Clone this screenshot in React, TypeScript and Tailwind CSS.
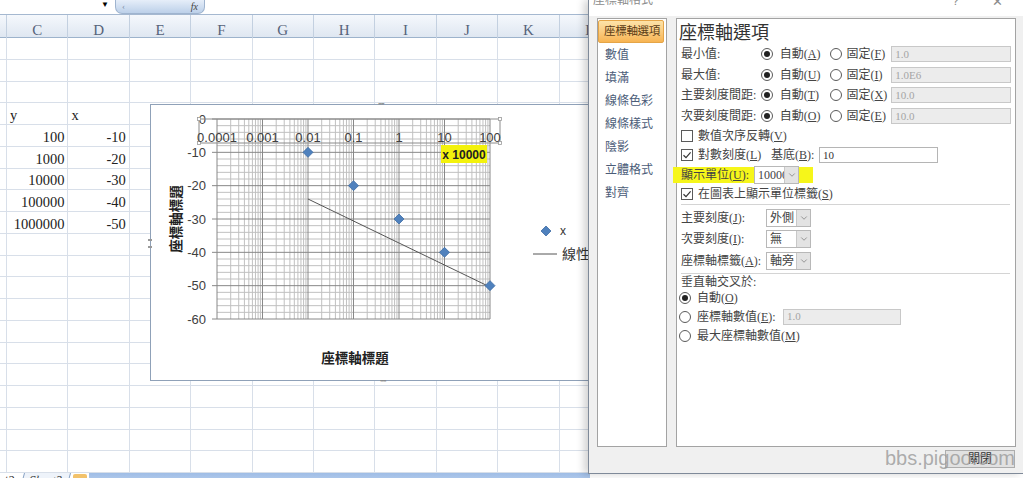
import { ChevronDown } from "lucide-react";

const COLS = ["", "C", "D", "E", "F", "G", "H", "I", "J", "K", "L"];

const DATA: Record<number, [string, string]> = {
  3: ["y", "x"],
  4: ["100", "-10"],
  5: ["1000", "-20"],
  6: ["10000", "-30"],
  7: ["100000", "-40"],
  8: ["1000000", "-50"],
};

function Sheet() {
  const rows = Array.from({ length: 20 }, (_, r) => r);
  return (
    <div className="flex flex-col w-[590px] overflow-hidden">
      <div className="flex h-[15px] items-start border-b border-[#a5b8d0] bg-white">
        <div className="w-[101px]" />
        <span className="text-[8px] leading-[10px] text-black">▼</span>
        <div className="ml-[6px] w-[90px] h-[14px] rounded-b-[7px] bg-linear-to-b from-[#e6eef9] to-[#bcd0e9] border border-t-0 border-[#9fb4cf] flex items-center justify-between px-[6px]">
          <span className="text-[9px] leading-none text-[#7a8ca5]">‹</span>
          <span className="italic text-[10px] leading-none text-[#444]">fx</span>
        </div>
      </div>
      <div className="grid grid-cols-[7px_repeat(10,61.4px)] h-[23px] bg-linear-to-b from-[#f5f8fc] to-[#dfe7f1] border-b border-[#9db3cc]">
        {COLS.map((c, i) => (
          <div
            key={i}
            className="border-r border-[#c3d0e0] flex items-center justify-center pt-[4px] text-[15px] text-[#56637a]"
          >
            {c}
          </div>
        ))}
      </div>
      <div className="grid grid-cols-[7px_repeat(10,61.4px)] auto-rows-[21.75px]">
        {rows.map((r) =>
          COLS.map((_, c) => {
            const d = DATA[r];
            let text = "";
            if (d && c === 1) text = d[0];
            if (d && c === 2) text = d[1];
            const left = r === 3;
            return (
              <div
                key={`${r}-${c}`}
                className={`border-r border-b border-[#d8dfe9] flex items-end leading-[17px] text-[14.5px] text-[#222] ${
                  left ? "justify-start pl-[3px]" : "justify-end pr-[3px]"
                }`}
              >
                {text}
              </div>
            );
          })
        )}
      </div>
      <div className="flex items-start h-[20px] text-[12px] leading-[14px]">
        <span className="w-[20px] text-[#222]">et2</span>
        <span className="ml-[2px] px-[6px] bg-[#eef3fa] border border-t-0 border-[#8aa3c4] text-[#333] -skew-x-[15deg]">
          Sheet3
        </span>
        <span className="ml-[4px] w-[14px] h-[10px] mt-[1px] rounded-[2px] bg-[#f2c26b]" />
        <div className="ml-[2px] flex-1 h-[14px] bg-linear-to-b from-[#9fbde6] to-[#c3d6ef]" />
      </div>
    </div>
  );
}

const X0 = 66;
const DEC = 45.5;
const Y0 = 14;
const YS = 200 / 60;

function Chart() {
  const vMinor: number[] = [];
  const vMajor: number[] = [];
  for (let i = 0; i < 6; i++) {
    const x = X0 + DEC * i;
    vMajor.push(x);
    for (let k = 2; k <= 9; k++) vMinor.push(x + DEC * Math.log10(k));
  }
  vMajor.push(X0 + DEC * 6);
  const hMinor: number[] = [];
  const hMajor: number[] = [];
  for (let v = 0; v <= 60; v += 2) {
    const y = Y0 + v * YS;
    if (v % 10 === 0) hMajor.push(y);
    else hMinor.push(y);
  }
  const right = X0 + DEC * 6;
  const bottom = Y0 + 60 * YS;
  const xLabels = ["0.0001", "0.001", "0.01", "0.1", "1", "10", "100"];
  const pts = [0, 1, 2, 3, 4].map((i) => ({
    x: X0 + DEC * (2 + i),
    y: Y0 + (i + 1) * 10 * YS,
  }));

  return (
    <div className="absolute left-[150px] top-[104px] w-[440px] h-[277px] border border-[#8fa1b8] bg-white">
      <svg width="438" height="275" className="block font-['Liberation_Sans','Noto_Sans_CJK_TC',sans-serif]">
        {vMinor.map((x, i) => (
          <line key={`vm${i}`} x1={x} x2={x} y1={Y0} y2={bottom} stroke="#c0c0c0" strokeWidth="1" />
        ))}
        {hMinor.map((y, i) => (
          <line key={`hm${i}`} x1={X0} x2={right} y1={y} y2={y} stroke="#c0c0c0" strokeWidth="1" />
        ))}
        {vMajor.map((x, i) => (
          <line key={`vM${i}`} x1={x} x2={x} y1={Y0} y2={bottom} stroke="#888" strokeWidth="1" />
        ))}
        {hMajor.map((y, i) => (
          <line key={`hM${i}`} x1={X0 - 5} x2={right} y1={y} y2={y} stroke="#888" strokeWidth="1" />
        ))}
        {hMajor.map((y, i) => (
          <text key={`yl${i}`} x={55} y={y + 4.5} textAnchor="end" fill="#404040" className="text-[13px]">
            {i === 0 ? "0" : `-${i * 10}`}
          </text>
        ))}
        <rect x={48} y={14} width={301} height={24} fill="none" stroke="#8c8c8c" strokeWidth="1" />
        {[
          [48, 14],
          [349, 14],
          [48, 38],
          [349, 38],
        ].map(([x, y], i) => (
          <rect key={`h${i}`} x={x - 1.5} y={y - 1.5} width={3} height={3} fill="#fff" stroke="#999" strokeWidth="0.8" />
        ))}
        {xLabels.map((l, i) => (
          <text key={`xl${i}`} x={X0 + DEC * i} y={36.5} textAnchor="middle" fill="#404040" className="text-[13px]">
            {l}
          </text>
        ))}
        <rect x={290} y={40} width={46} height={18} fill="#f3f20c" />
        <text x={313} y={53.5} textAnchor="middle" fill="#222" fontWeight="bold" className="text-[12px]">
          x 10000
        </text>
        <line x1={157} y1={94} x2={339} y2={182} stroke="#555" strokeWidth="1" />
        {pts.map((p, i) => (
          <polygon
            key={`p${i}`}
            points={`${p.x},${p.y - 5} ${p.x + 5},${p.y} ${p.x},${p.y + 5} ${p.x - 5},${p.y}`}
            fill="#4f81bd"
            stroke="#3d6ca5"
            strokeWidth="0.8"
          />
        ))}
        <text
          x={26}
          y={114}
          textAnchor="middle"
          dominantBaseline="middle"
          transform="rotate(-90 26 114)"
          fill="#222"
          fontWeight="bold"
          className="text-[13.5px]"
        >
          座標軸標題
        </text>
        <text x={204} y={258} textAnchor="middle" fill="#222" fontWeight="bold" className="text-[13.5px]">
          座標軸標題
        </text>
        <polygon points="395,121 400,126 395,131 390,126" fill="#4f81bd" stroke="#3d6ca5" strokeWidth="0.8" />
        <text x={409} y={130} fill="#333" className="text-[12px]">
          x
        </text>
        <line x1={382} y1={149} x2={406} y2={149} stroke="#555" strokeWidth="1" />
        <text x={411} y={154} fill="#333" className="text-[14px]">
          線性(x)
        </text>
      </svg>
      <span className="absolute left-[227px] -top-[4px] text-[7px] leading-none tracking-[-1px] text-[#888]">••••</span>
      <span className="absolute left-[229px] -bottom-[5px] text-[7px] leading-none tracking-[-1px] text-[#888]">••••</span>
      <span className="absolute -left-[3px] top-[134px] w-[4px] h-[9px] border-y-2 border-dotted border-[#999]" />
    </div>
  );
}

function Radio({ on }: { on?: boolean }) {
  return (
    <span className="w-[12px] h-[12px] rounded-full border border-[#5a5a5a] bg-white flex items-center justify-center shrink-0">
      {on && <span className="w-[6px] h-[6px] rounded-full bg-[#222]" />}
    </span>
  );
}

function Check({ on }: { on?: boolean }) {
  return (
    <span className="w-[12px] h-[12px] border border-[#5a5a5a] bg-white flex items-center justify-center shrink-0">
      {on && (
        <svg width="10" height="10" viewBox="0 0 10 10">
          <path d="M1.5 5.2 L4 7.6 L8.6 2.4" fill="none" stroke="#333" strokeWidth="1.2" />
        </svg>
      )}
    </span>
  );
}

function Field({ value, w, disabled }: { value: string; w: string; disabled?: boolean }) {
  return (
    <div
      className={`${w} h-[16px] border flex items-center px-[3px] text-[11px] ${
        disabled ? "bg-[#ececec] border-[#c8c8c8] text-[#a5a5a5]" : "bg-white border-[#b5b5b5] text-[#333]"
      }`}
    >
      {value}
    </div>
  );
}

function Drop({ value, tw = "w-[29px]" }: { value: string; tw?: string }) {
  return (
    <div className="flex h-[18px] border border-[#b8b8b8] bg-white">
      <div className={`${tw} px-[3px] overflow-hidden whitespace-nowrap flex items-center text-[12px] text-[#444]`}>
        {value}
      </div>
      <div className="w-[14px] bg-[#e3e3e3] border-l border-[#c8c8c8] flex items-center justify-center">
        <ChevronDown size={10} strokeWidth={1.5} color="#666" />
      </div>
    </div>
  );
}

function AutoFixedRow({
  label,
  a,
  f,
  value,
}: {
  label: string;
  a: string;
  f: string;
  value: string;
}) {
  return (
    <div className="h-[20.5px] flex items-center">
      <span className="w-[80px]">{label}</span>
      <span className="w-[69px] flex items-center gap-[7px]">
        <Radio on />
        <span>
          自動(<u>{a}</u>)
        </span>
      </span>
      <span className="w-[62px] flex items-center gap-[5px]">
        <Radio />
        <span>
          固定(<u>{f}</u>)
        </span>
      </span>
      <Field value={value} w="w-[120px]" disabled />
    </div>
  );
}

const LIST = ["座標軸選項", "數值", "填滿", "線條色彩", "線條樣式", "陰影", "立體格式", "對齊"];

function FormatDialog() {
  return (
    <div className="absolute left-[588px] top-0 w-[435px] h-[474px] bg-[#f0f0f0] border-l border-b border-[#7f8a99] shadow-[-4px_0_8px_rgba(0,0,0,0.18)] flex flex-col font-['Liberation_Serif','Noto_Sans_CJK_TC',serif]">
      <div className="h-[16px] bg-white flex items-start text-[#8c8c8c] overflow-hidden">
        <span className="ml-[4px] -mt-[8px] text-[12px] leading-[16px]">座標軸格式</span>
        <span className="ml-auto -mt-[7px] text-[12px] leading-[16px] font-['Liberation_Sans',sans-serif]">?</span>
        <span className="ml-[33px] mr-[20px] -mt-[6px] text-[13px] leading-[16px] font-['Liberation_Sans',sans-serif]">
          ✕
        </span>
      </div>
      <div className="mt-[2px] flex gap-[9px] pl-[8px] pr-[7px] h-[429px]">
        <div className="w-[71px] h-full border border-[#a3a3a3] bg-white pt-[1px] flex flex-col text-[12px] text-[#4b5c78]">
          {LIST.map((t, i) => (
            <div
              key={t}
              className={`h-[23px] flex items-center whitespace-nowrap ${
                i === 0
                  ? "w-[66px] bg-linear-to-b from-[#fde3a8] to-[#f7b452] border border-[#e5a547] rounded-[2px] text-[#5a3c16] pl-[5px] text-[11.5px] tracking-[-0.3px]"
                  : "pl-[7px]"
              }`}
            >
              {t}
            </div>
          ))}
        </div>
        <div className="w-[340px] h-full border border-[#a3a3a3] bg-white px-[4px] flex flex-col text-[12px] text-[#444]">
          <div className="mt-[3px] h-[22px] -ml-[2px] flex items-center text-[18px] text-[#333]">座標軸選項</div>
          <AutoFixedRow label="最小值:" a="A" f="F" value="1.0" />
          <AutoFixedRow label="最大值:" a="U" f="I" value="1.0E6" />
          <AutoFixedRow label="主要刻度間距:" a="T" f="X" value="10.0" />
          <AutoFixedRow label="次要刻度間距:" a="O" f="E" value="10.0" />
          <div className="h-[19.5px] flex items-center gap-[5px]">
            <Check />
            <span>
              數值次序反轉(<u>V</u>)
            </span>
          </div>
          <div className="h-[19.5px] flex items-center">
            <Check on />
            <span className="ml-[5px] w-[73px]">
              對數刻度(<u>L</u>)
            </span>
            <span className="w-[48px]">
              基底(<u>B</u>):
            </span>
            <Field value="10" w="w-[119px]" />
          </div>
          <div className="h-[19.5px] flex items-center">
            <div className="-ml-[8px] pl-[8px] w-[140px] h-[16px] bg-[#f6f61a] flex items-center">
              <span className="w-[73px]">
                顯示單位(<u>U</u>):
              </span>
              <Drop value="10000" />
            </div>
          </div>
          <div className="h-[19.5px] flex items-center gap-[5px]">
            <Check on />
            <span>
              在圖表上顯示單位標籤(<u>S</u>)
            </span>
          </div>
          <div className="h-px bg-[#d4d4d4] mr-[1px]" />
          <div className="mt-[2px] h-[21.5px] flex items-center">
            <span className="w-[85px]">
              主要刻度(<u>J</u>):
            </span>
            <Drop value="外側" />
          </div>
          <div className="h-[21.5px] flex items-center">
            <span className="w-[85px]">
              次要刻度(<u>I</u>):
            </span>
            <Drop value="無" />
          </div>
          <div className="h-[21.5px] flex items-center">
            <span className="w-[85px]">
              座標軸標籤(<u>A</u>):
            </span>
            <Drop value="軸旁" />
          </div>
          <div className="mt-[1px] h-px bg-[#d4d4d4] mr-[1px]" />
          <div className="h-[17px] flex items-center">垂直軸交叉於:</div>
          <div className="h-[14px] flex items-center gap-[6px] -ml-[2px]">
            <Radio on />
            <span>
              自動(<u>O</u>)
            </span>
          </div>
          <div className="h-[24px] flex items-center -ml-[2px]">
            <Radio />
            <span className="ml-[6px] w-[86px]">
              座標軸數值(<u>E</u>):
            </span>
            <Field value="1.0" w="w-[118px]" disabled />
          </div>
          <div className="h-[15px] flex items-center gap-[6px] -ml-[2px]">
            <Radio />
            <span>
              最大座標軸數值(<u>M</u>)
            </span>
          </div>
        </div>
      </div>
      <div className="relative flex justify-end pr-[8px] pt-[3px]">
        <button className="w-[70px] h-[18px] bg-[#e1e1e1] border border-[#adadad] text-[12px] text-[#333] flex items-center justify-center">
          關閉
        </button>
        <span className="absolute right-[8px] top-[-1px] text-[20px] leading-[24px] text-[#9a9a9a]/80 font-['Liberation_Sans',sans-serif] pointer-events-none">
          bbs.pigoo.com
        </span>
      </div>
    </div>
  );
}

export default function App() {
  return (
    <div className="relative w-[1023px] h-[478px] overflow-hidden bg-white font-['Liberation_Serif','Noto_Sans_CJK_TC',serif]">
      <Sheet />
      <Chart />
      <FormatDialog />
    </div>
  );
}
